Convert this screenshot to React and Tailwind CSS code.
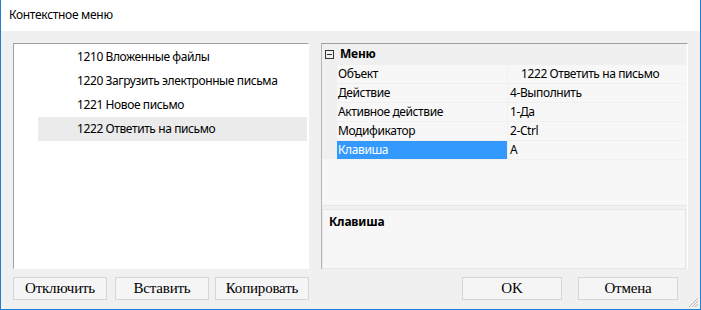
import React from "react";

const ui = { fontFamily: '"Noto Sans", "Open Sans", sans-serif' };
const serif = { fontFamily: '"Liberation Serif", "Times New Roman", serif' };

function Btn({ children, w = "w-[94px]" }) {
  return (
    <div
      className={`${w} h-[23px] flex items-center justify-center bg-[#f5f5f5] border border-[#d6d6d6] text-[15px] tracking-[-0.2px] text-black`}
      style={serif}
    >
      {children}
    </div>
  );
}

const rows = [
  ["Объект", "1222 Ответить на письмо", true],
  ["Действие", "4-Выполнить"],
  ["Активное действие", "1-Да"],
  ["Модификатор", "2-Ctrl"],
  ["Клавиша", "A", false, true],
];

export default function App() {
  return (
    <div
      className="w-[701px] h-[310px] flex flex-col border-x border-b border-[#1b7fd5] bg-[#f0f0f0] overflow-hidden text-[12px] tracking-[-0.4px] text-black"
      style={ui}
    >
      <div className="h-[31px] shrink-0 bg-white flex items-center pl-[8px] pb-[1px] tracking-[-0.3px]">
        Контекстное меню
      </div>
      <div className="flex-1 flex flex-col px-[12px] pt-[12px] relative">
        <div className="flex gap-[12px] h-[226px]">
          {/* left list */}
          <div className="w-[296px] h-full bg-white border-l border-t border-[#a0a0a0] border-r border-b border-r-white border-b-white pt-[1px]">
            {[
              "1210 Вложенные файлы",
              "1220 Загрузить электронные письма",
              "1221 Новое письмо",
              "1222 Ответить на письмо",
            ].map((t, i) => (
              <div
                key={t}
                className={`ml-[24px] mr-[1px] h-[24px] flex items-center pl-[39px] ${
                  i === 3 ? "bg-[#ebebeb]" : ""
                }`}
              >
                {t}
              </div>
            ))}
          </div>
          {/* right property grid */}
          <div className="w-[367px] h-full flex flex-col border-l border-[#b4b4b4] border-t border-t-[#a0a0a0] border-r border-r-white bg-[#f0f0f0]">
            <div className="flex flex-col bg-[#f7f7f7] h-[162px] border-b border-[#e6e6e6]">
              <div className="h-[20px] shrink-0 flex items-center bg-[#f0f0f0] mr-[1px]">
                <div className="w-[15px] flex justify-center">
                  <svg width="9" height="9" viewBox="0 0 9 9">
                    <rect x="0.5" y="0.5" width="8" height="8" fill="none" stroke="#333" />
                    <line x1="2" y1="4.5" x2="7" y2="4.5" stroke="#333" />
                  </svg>
                </div>
                <span className="font-bold pl-[3px] tracking-[-0.2px]">Меню</span>
              </div>
              <div className="flex mr-[1px]">
                <div className="w-[15px] shrink-0 bg-[#f0f0f0]" />
                <div className="flex-1 flex flex-col">
                  {rows.map(([k, v, indent, sel]) => (
                    <div key={k} className="h-[19px] flex border-t border-[#f0f0f0]">
                      <div
                        className={`w-[170px] shrink-0 flex items-center pl-[1px] ${
                          sel ? "bg-[#3399ff] text-white" : ""
                        }`}
                      >
                        {k}
                      </div>
                      <div className="w-[1px] shrink-0 bg-[#f0f0f0]" />
                      <div className={`flex-1 flex items-center ${indent ? "pl-[13px]" : "pl-[2px]"}`}>
                        {v}
                      </div>
                    </div>
                  ))}
                </div>
              </div>
              <div className="border-t border-[#f0f0f0] ml-[15px] mr-[1px]" />
            </div>
            <div className="h-[3px]" />
            <div className="flex-1 bg-[#f7f7f7] border border-[#e8e8e8] mr-[1px] pl-[6px] pt-[3px]">
              <div className="font-bold tracking-[-0.2px]">Клавиша</div>
            </div>
          </div>
        </div>
        <div className="flex mt-[8px] h-[23px]">
          <Btn>Отключить</Btn>
          <div className="w-[8px]" />
          <Btn>Вставить</Btn>
          <div className="w-[6px]" />
          <Btn>Копировать</Btn>
          <div className="w-[153px]" />
          <Btn w="w-[100px]">OK</Btn>
          <div className="w-[16px]" />
          <Btn w="w-[100px]">Отмена</Btn>
        </div>
        <svg className="absolute right-[1px] bottom-[1px]" width="11" height="11" viewBox="0 0 11 11">
          <line x1="10" y1="1" x2="1" y2="10" stroke="#b8b8b8" />
          <line x1="10" y1="4" x2="4" y2="10" stroke="#b8b8b8" />
          <line x1="10" y1="7" x2="7" y2="10" stroke="#b8b8b8" />
        </svg>
      </div>
    </div>
  );
}
